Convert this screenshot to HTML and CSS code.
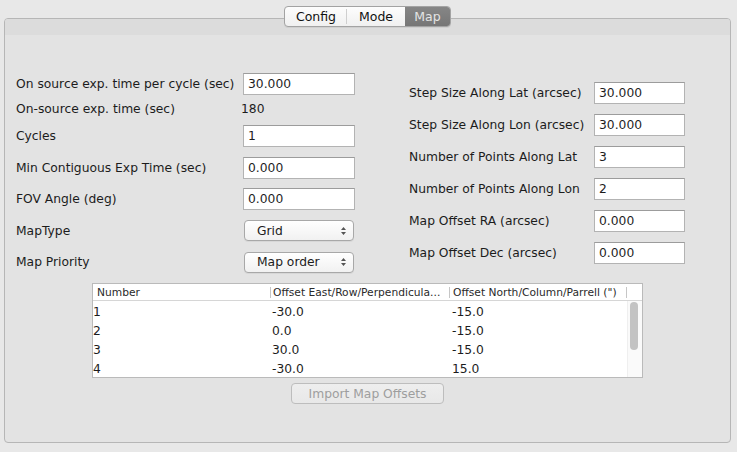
FILE: index.html
```html
<!DOCTYPE html>
<html>
<head>
<meta charset="utf-8">
<link rel="stylesheet" href="styles.css">
</head>
<body>
<div class="window">
  <div class="tabs">
    <div class="seg seg-config">Config</div>
    <div class="seg seg-mode">Mode</div>
    <div class="seg seg-map active">Map</div>
  </div>
  <div class="panel">
    <div class="band"></div>
    <div class="form">
      <div class="col col-left">
        <div class="row r1"><span class="lbl">On source exp. time per cycle (sec)</span><div class="field">30.000</div></div>
        <div class="row r2"><span class="lbl">On-source exp. time (sec)</span><span class="val">180</span></div>
        <div class="row r3"><span class="lbl">Cycles</span><div class="field">1</div></div>
        <div class="row r4"><span class="lbl">Min Contiguous Exp Time (sec)</span><div class="field">0.000</div></div>
        <div class="row r5"><span class="lbl">FOV Angle (deg)</span><div class="field">0.000</div></div>
        <div class="row r6"><span class="lbl">MapType</span><div class="select"><span>Grid</span><svg class="arrows" width="7" height="10" viewBox="0 0 7 10"><path d="M1 4 L3.5 1 L6 4 Z M1 6 L3.5 9 L6 6 Z" fill="#555"/></svg></div></div>
        <div class="row r7"><span class="lbl">Map Priority</span><div class="select"><span>Map order</span><svg class="arrows" width="7" height="10" viewBox="0 0 7 10"><path d="M1 4 L3.5 1 L6 4 Z M1 6 L3.5 9 L6 6 Z" fill="#555"/></svg></div></div>
      </div>
      <div class="col col-right">
        <div class="row"><span class="lbl">Step Size Along Lat (arcsec)</span><div class="field">30.000</div></div>
        <div class="row"><span class="lbl">Step Size Along Lon (arcsec)</span><div class="field">30.000</div></div>
        <div class="row"><span class="lbl">Number of Points Along Lat</span><div class="field">3</div></div>
        <div class="row"><span class="lbl">Number of Points Along Lon</span><div class="field">2</div></div>
        <div class="row"><span class="lbl">Map Offset RA (arcsec)</span><div class="field">0.000</div></div>
        <div class="row"><span class="lbl">Map Offset Dec (arcsec)</span><div class="field">0.000</div></div>
      </div>
    </div>
    <div class="table">
      <div class="thead">
        <div class="th c1">Number</div>
        <div class="th c2">Offset East/Row/Perpendicula...</div>
        <div class="th c3">Offset North/Column/Parrell (&quot;)</div>
        <div class="th sb"></div>
      </div>
      <div class="tbody-wrap">
        <div class="tbody">
          <div class="tr"><div class="td c1">1</div><div class="td c2">-30.0</div><div class="td c3">-15.0</div></div>
          <div class="tr"><div class="td c1">2</div><div class="td c2">0.0</div><div class="td c3">-15.0</div></div>
          <div class="tr"><div class="td c1">3</div><div class="td c2">30.0</div><div class="td c3">-15.0</div></div>
          <div class="tr"><div class="td c1">4</div><div class="td c2">-30.0</div><div class="td c3">15.0</div></div>
        </div>
        <div class="scrollbar"><div class="thumb"></div></div>
      </div>
    </div>
    <div class="btn-row"><button class="btn" disabled>Import Map Offsets</button></div>
  </div>
</div>
</body>
</html>
```
FILE: styles.css
```css
html, body {
  margin: 0;
  padding: 0;
}
body {
  width: 737px;
  height: 452px;
  background: #e8e8e8;
  font-family: "DejaVu Sans", sans-serif;
  font-size: 12.3px;
  color: #1c1c1c;
  overflow: hidden;
}
.window {
  padding: 6px 6px 0 4px;
  display: flex;
  flex-direction: column;
}
.tabs {
  position: relative;
  z-index: 1;
  align-self: center;
  display: flex;
  height: 21px;
  box-sizing: border-box;
  border: 1px solid #a3a3a3;
  border-radius: 4px;
  background: linear-gradient(#fdfdfd, #f0f0f0);
  box-shadow: 0 1px 0 rgba(0,0,0,0.06);
  overflow: hidden;
  font-size: 12.5px;
  color: #111;
}
.seg {
  display: flex;
  align-items: center;
  justify-content: center;
  height: 100%;
}
.seg-config {
  width: 62px;
  background: linear-gradient(#cfcfcf, #cfcfcf) right center / 1px 15px no-repeat;
}
.seg-mode { width: 58px; }
.seg-map { width: 45px; }
.seg.active {
  background: linear-gradient(#868686, #767676);
  color: #e4e4e4;
}
.panel {
  margin-top: -9px;
  height: 425px;
  box-sizing: border-box;
  border: 1px solid #b6b6b6;
  border-radius: 4px;
  background: #e3e3e3;
  display: flex;
  flex-direction: column;
}
.band {
  height: 16px;
  background: #dcdcdc;
  border-radius: 3px 3px 0 0;
}
.form {
  display: flex;
  align-items: center;
  padding: 38px 0 0 11px;
  gap: 54px;
}
.col {
  display: flex;
  flex-direction: column;
}
.col-left .row {
  display: grid;
  grid-template-columns: 227px 112px;
  align-items: center;
  height: 22px;
}
.col-left .r2 { margin-top: 3px; }
.col-left .r3 { margin-top: 5px; }
.col-left .r4 { margin-top: 10px; }
.col-left .r5 { margin-top: 9px; }
.col-left .r6 { margin-top: 10px; height: 21px; }
.col-left .r7 { margin-top: 10px; }
.col-right {
  gap: 10px;
}
.col-right .row {
  display: grid;
  grid-template-columns: 185px 91px;
  align-items: center;
  height: 22px;
}
.lbl {
  white-space: nowrap;
}
.val {
  margin-left: -2px;
}
.field {
  height: 22px;
  box-sizing: border-box;
  border: 1px solid #b3b3b3;
  border-top-color: #9c9c9c;
  background: #fff;
  padding: 0 4px;
  display: flex;
  align-items: center;
}
.select {
  height: 21px;
  width: 110px;
  margin-left: 1px;
  box-sizing: border-box;
  border: 1px solid #a8a8a8;
  border-radius: 4px;
  background: linear-gradient(#ffffff, #f1f1f1);
  box-shadow: 0 1px 0 rgba(0,0,0,0.05);
  display: flex;
  align-items: center;
  justify-content: space-between;
  padding: 0 6px 0 12px;
}
.arrows { display: block; }
.table {
  margin: 10px auto 0;
  width: 551px;
  box-sizing: border-box;
  border: 1px solid #bababa;
  background: #fff;
}
.thead {
  display: flex;
  height: 16px;
  border-bottom: 1px solid #d6d6d6;
  font-size: 10.7px;
  color: #2a2a2a;
}
.th {
  display: flex;
  align-items: center;
  white-space: nowrap;
  overflow: hidden;
  box-sizing: border-box;
  background: linear-gradient(#c6c6c6, #c6c6c6) right center / 1px 11px no-repeat;
}
.c1 { width: 178px; }
.c2 { width: 179px; }
.c3 { width: 177px; }
.th.c1 { padding-left: 4px; }
.th.c2 { padding-left: 2px; }
.th.c3 { padding-left: 3px; }
.th.sb { width: 15px; background: none; }
.tbody-wrap {
  display: flex;
  height: 76px;
}
.tbody {
  width: 534px;
}
.tr {
  display: flex;
  height: 19px;
}
.td {
  display: flex;
  align-items: center;
  box-sizing: border-box;
  white-space: nowrap;
  padding-top: 3px;
}
.td.c1 { padding-left: 0; }
.td.c2 { padding-left: 1px; }
.td.c3 { padding-left: 2px; }
.scrollbar {
  width: 15px;
  box-sizing: border-box;
  border-left: 1px solid #efefef;
  background: #fafafa;
  padding: 1px 0 0 2px;
}
.thumb {
  width: 8px;
  height: 48px;
  border-radius: 4px;
  background: #c3c3c3;
}
.btn-row {
  display: flex;
  justify-content: center;
  padding-top: 5px;
}
.btn {
  width: 153px;
  height: 21px;
  box-sizing: border-box;
  border: 1px solid #bdbdbd;
  border-radius: 4px;
  background: linear-gradient(#eeeeee, #e8e8e8);
  color: #9e9e9e;
  font-family: "DejaVu Sans", sans-serif;
  font-size: 12.3px;
  padding: 0;
  margin: 0;
}
```
